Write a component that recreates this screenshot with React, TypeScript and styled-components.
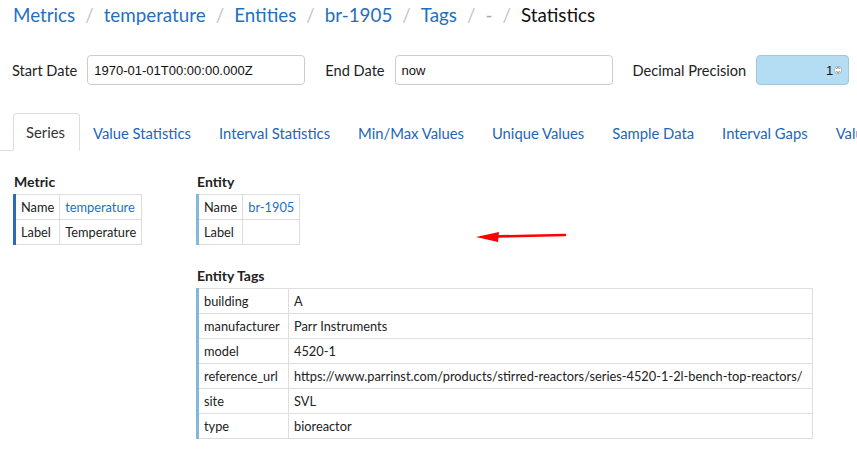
import React from "react";
import styled, { createGlobalStyle } from "styled-components";

const Global = createGlobalStyle`
  html, body { margin: 0; padding: 0; background: #fff; }
  body { font-family: "Lato", "Liberation Sans", sans-serif; color: #333; width: 857px; height: 450px; overflow: hidden; }
  * { box-sizing: border-box; }
`;

const Page = styled.div`
  position: relative;
  width: 857px;
  height: 450px;
  overflow: hidden;
`;

const Breadcrumb = styled.nav`
  display: flex;
  align-items: center;
  height: 29px;
  padding: 0 0 0 13px;
  font-size: 18.8px;
  white-space: nowrap;
`;

const Crumb = styled.span<{ $kind: "link" | "muted" | "current" }>`
  color: ${(p) => (p.$kind === "link" ? "#1f6fbf" : p.$kind === "muted" ? "#aaa" : "#111")};
`;

const Sep = styled.span`
  color: #c4c4c4;
  padding: 0 10px;
`;

const Filters = styled.div`
  display: flex;
  align-items: center;
  margin-top: 26px;
  padding-left: 12px;
  height: 30px;
  font-size: 14.6px;
`;

const Label = styled.span<{ $gap?: number }>`
  margin-left: ${(p) => p.$gap ?? 0}px;
  margin-right: 10px;
  color: #222;
`;

const Field = styled.div<{ $w: number; $tint?: boolean }>`
  width: ${(p) => p.$w}px;
  height: 30px;
  border: 1px solid ${(p) => (p.$tint ? "#9fc7e0" : "#ccc")};
  border-radius: 4px;
  background: ${(p) => (p.$tint ? "#b4dcf2" : "#fff")};
  display: flex;
  align-items: center;
  justify-content: ${(p) => (p.$tint ? "flex-end" : "flex-start")};
  padding: 0 6px;
  font-size: 13px;
  color: #111;
  font-family: "Liberation Sans", sans-serif;
`;

const Spinner = styled.svg`
  margin-left: 1px;
`;

const Tabs = styled.div`
  display: flex;
  margin-top: 28px;
  padding-left: 13px;
  border-bottom: 1px solid #ddd;
  height: 38px;
  white-space: nowrap;
`;

const Tab = styled.div<{ $active?: boolean }>`
  height: 38px;
  padding: 0 14px 0 12px;
  display: flex;
  align-items: center;
  font-size: 14.8px;
  color: ${(p) => (p.$active ? "#333" : "#2166b8")};
  border: 1px solid ${(p) => (p.$active ? "#ddd" : "transparent")};
  border-bottom: ${(p) => (p.$active ? "1px solid #fff" : "none")};
  border-radius: 4px 4px 0 0;
  background: #fff;
  margin-bottom: -1px;
  flex-shrink: 0;
`;

const Content = styled.div`
  display: flex;
  align-items: flex-start;
  padding: 23px 0 0 13px;
`;

const Column = styled.div<{ $w?: number }>`
  display: flex;
  flex-direction: column;
  align-items: flex-start;
  width: ${(p) => (p.$w ? `${p.$w}px` : "auto")};
`;

const Heading = styled.div<{ $top?: number }>`
  font-weight: 700;
  font-size: 14px;
  color: #222;
  margin-top: ${(p) => p.$top ?? 0}px;
  margin-bottom: 5px;
  padding-left: 1px;
  line-height: 15px;
`;

const Table = styled.table<{ $accent: string; $w?: number }>`
  border-collapse: collapse;
  border-left: 3px solid ${(p) => p.$accent};
  font-size: 12.8px;
  color: #222;
  width: ${(p) => (p.$w ? `${p.$w}px` : "auto")};
  td {
    border: 1px solid #ddd;
    height: 25px;
    padding: 0 5px;
    white-space: nowrap;
  }
  td:first-child { border-left: none; }
`;

const KeyCell = styled.td<{ $w?: number }>`
  width: ${(p) => (p.$w ? `${p.$w}px` : "auto")};
`;

const LinkText = styled.span`
  color: #1f6fbf;
`;

const Arrow = styled.svg`
  position: absolute;
  left: 474px;
  top: 227px;
`;

const tabs = [
  "Series",
  "Value Statistics",
  "Interval Statistics",
  "Min/Max Values",
  "Unique Values",
  "Sample Data",
  "Interval Gaps",
  "Value Filter",
];

const tags: [string, string][] = [
  ["building", "A"],
  ["manufacturer", "Parr Instruments"],
  ["model", "4520-1"],
  ["reference_url", "https://www.parrinst.com/products/stirred-reactors/series-4520-1-2l-bench-top-reactors/"],
  ["site", "SVL"],
  ["type", "bioreactor"],
];

export default function App() {
  const crumbs: [string, "link" | "muted" | "current"][] = [
    ["Metrics", "link"],
    ["temperature", "link"],
    ["Entities", "link"],
    ["br-1905", "link"],
    ["Tags", "link"],
    ["-", "muted"],
    ["Statistics", "current"],
  ];
  return (
    <Page>
      <Global />
      <Breadcrumb>
        {crumbs.map(([t, k], i) => (
          <React.Fragment key={i}>
            {i > 0 && <Sep>/</Sep>}
            <Crumb $kind={k}>{t}</Crumb>
          </React.Fragment>
        ))}
      </Breadcrumb>
      <Filters>
        <Label>Start Date</Label>
        <Field $w={218}>1970-01-01T00:00:00.000Z</Field>
        <Label $gap={20}>End Date</Label>
        <Field $w={218}>now</Field>
        <Label $gap={20}>Decimal Precision</Label>
        <Field $w={93} $tint>
          1
          <Spinner width="8" height="14" viewBox="0 0 8 14">
            <circle cx="4" cy="7" r="3.6" fill="#fff" stroke="#888" strokeWidth="0.6" />
            <path d="M2.5 5.8 L4 4.3 L5.5 5.8 M2.5 8.2 L4 9.7 L5.5 8.2" fill="none" stroke="#333" strokeWidth="0.8" />
          </Spinner>
        </Field>
      </Filters>
      <Tabs>
        {tabs.map((t, i) => (
          <Tab key={t} $active={i === 0}>
            {t}
          </Tab>
        ))}
      </Tabs>
      <Content>
        <Column $w={183}>
          <Heading>Metric</Heading>
          <Table $accent="#2a6db5">
            <tbody>
              <tr>
                <KeyCell>Name</KeyCell>
                <td>
                  <LinkText>temperature</LinkText>
                </td>
              </tr>
              <tr>
                <KeyCell>Label</KeyCell>
                <td>Temperature</td>
              </tr>
            </tbody>
          </Table>
        </Column>
        <Column>
          <Heading>Entity</Heading>
          <Table $accent="#82b8dc">
            <tbody>
              <tr>
                <KeyCell>Name</KeyCell>
                <td>
                  <LinkText>br-1905</LinkText>
                </td>
              </tr>
              <tr>
                <KeyCell>Label</KeyCell>
                <td></td>
              </tr>
            </tbody>
          </Table>
          <Heading $top={23}>Entity Tags</Heading>
          <Table $accent="#82b8dc" $w={617}>
            <tbody>
              {tags.map(([k, v]) => (
                <tr key={k}>
                  <KeyCell $w={91}>{k}</KeyCell>
                  <td>{v}</td>
                </tr>
              ))}
            </tbody>
          </Table>
        </Column>
      </Content>
      <Arrow width="94" height="20" viewBox="0 0 94 20">
        <path d="M20 9.5 L91 8" stroke="#f00" strokeWidth="2.6" strokeLinecap="round" />
        <path d="M2 10 L25 5 L24 15 Z" fill="#f00" />
      </Arrow>
    </Page>
  );
}
